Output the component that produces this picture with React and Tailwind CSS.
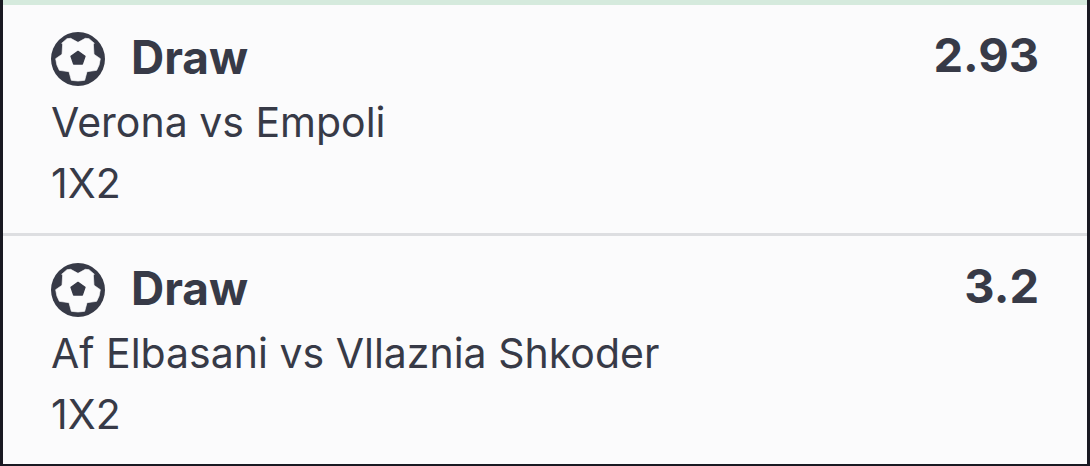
const selections = [
  { id: 1, pick: "Draw", odds: "2.93", match: "Verona vs Empoli", market: "1X2" },
  { id: 2, pick: "Draw", odds: "3.2", match: "Af Elbasani vs Vllaznia Shkoder", market: "1X2" },
];

function FootballIcon() {
  return (
    <svg viewBox="0 0 162 162" className="size-[54px] shrink-0" aria-hidden="true">
      <circle cx="81" cy="81" r="81" fill="#373a47" />
      <path
        fill="#fbfbfc"
        stroke="#fbfbfc"
        strokeWidth="2"
        strokeLinejoin="round"
        d="M48 20 L59 19 L81 31 L103 19 L114 20 L130 34 L127 36 L129 67 L148 80 Q146 101 137 115 L108 119 L101 145 Q81 149 61 145 L54 119 L25 115 Q16 101 14 80 L33 67 L35 36 L32 34 Z"
      />
      <path
        fill="#373a47"
        stroke="#373a47"
        strokeWidth="4"
        strokeLinejoin="round"
        d="M81 58 L102 73 L94 96 L68 96 L60 73 Z"
      />
    </svg>
  );
}

function Selection({ pick, odds, match, market }) {
  return (
    <li className="px-12 pt-6 pb-[19px]">
      <div className="flex items-start justify-between">
        <h2 className="flex items-end gap-[26px] text-[46px] leading-[57px] font-bold">
          <FootballIcon />
          {pick}
        </h2>
        <span className="text-[47px] leading-[52px] font-bold">{odds}</span>
      </div>
      <p className="pt-1.5 text-[41px] leading-[61px]">{match}</p>
      <p className="text-[41px] leading-[61px]">{market}</p>
    </li>
  );
}

export default function App() {
  return (
    <main className="border-x-3 border-b-3 border-[#191922] bg-[#fbfbfc] font-['Inter',sans-serif] text-[#373a47]">
      <div className="h-[5px] bg-[#d5eadd]" />
      <ul className="divide-y-3 divide-[#dddee1]">
        {selections.map((s) => (
          <Selection key={s.id} {...s} />
        ))}
      </ul>
    </main>
  );
}
